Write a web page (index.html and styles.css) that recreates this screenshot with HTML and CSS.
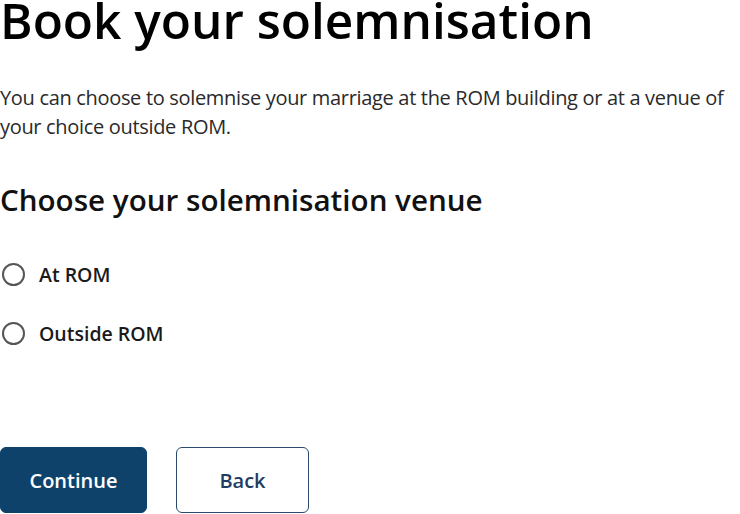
FILE: index.html
```html
<!DOCTYPE html>
<html lang="en">
<head>
<meta charset="utf-8">
<link rel="stylesheet" href="styles.css">
</head>
<body>
<main class="page">
  <h1 class="title">Book your solemnisation</h1>
  <p class="intro">You can choose to solemnise your marriage at the ROM building or at a venue of your choice outside ROM.</p>
  <fieldset class="venue">
    <legend class="subtitle">Choose your solemnisation venue</legend>
    <label class="option"><input type="radio" name="venue" class="radio"><span class="radio-mark"></span><span class="option-label">At ROM</span></label>
    <label class="option"><input type="radio" name="venue" class="radio"><span class="radio-mark"></span><span class="option-label">Outside ROM</span></label>
  </fieldset>
  <div class="actions">
    <button class="btn btn-primary" type="button">Continue</button>
    <button class="btn btn-secondary" type="button">Back</button>
  </div>
</main>
</body>
</html>
```
FILE: styles.css
```css
* { box-sizing: border-box; }
html, body { margin: 0; padding: 0; background: #fff; }
body {
  font-family: "Open Sans", "Noto Sans", sans-serif;
  color: #111;
}
.page {
  width: 740px;
  display: flex;
  flex-direction: column;
}
.title {
  margin: 0;
  font-size: 49.5px;
  line-height: 40px;
  font-weight: 600;
  color: #000;
  letter-spacing: 0;
}
.intro {
  margin: 43px 0 0;
  font-size: 20px;
  line-height: 29px;
  color: #2a2a2a;
  letter-spacing: -0.32px;
}
.venue {
  border: 0;
  margin: 0;
  padding: 0;
  display: flex;
  flex-direction: column;
}
.subtitle {
  padding: 0;
  margin: 39px 0 0;
  font-size: 29.6px;
  line-height: 40px;
  font-weight: 600;
  color: #111;
  float: left;
  width: 100%;
}
.option {
  display: flex;
  align-items: center;
  gap: 14px;
  height: 28px;
  cursor: pointer;
}
.option:first-of-type { margin-top: 40px; }
.option + .option { margin-top: 31px; }
.radio { display: none; }
.radio-mark {
  width: 23px;
  height: 23px;
  margin-left: 2px;
  border: 2px solid #555;
  border-radius: 50%;
  flex: none;
}
.option-label {
  font-size: 19.5px;
  font-weight: 600;
  color: #1a1a1a;
}
.actions {
  display: flex;
  gap: 29px;
  margin-top: 100px;
}
.btn {
  height: 66px;
  border-radius: 6px;
  font-family: "Open Sans", "Noto Sans", sans-serif;
  font-size: 20px;
  font-weight: 600;
  cursor: pointer;
}
.btn-primary {
  width: 147px;
  background: #0f426b;
  color: #fff;
  border: 1px solid #0f426b;
}
.btn-secondary {
  width: 133px;
  background: #fff;
  color: #1f3d63;
  border: 1px solid #2a4a6e;
}
```
